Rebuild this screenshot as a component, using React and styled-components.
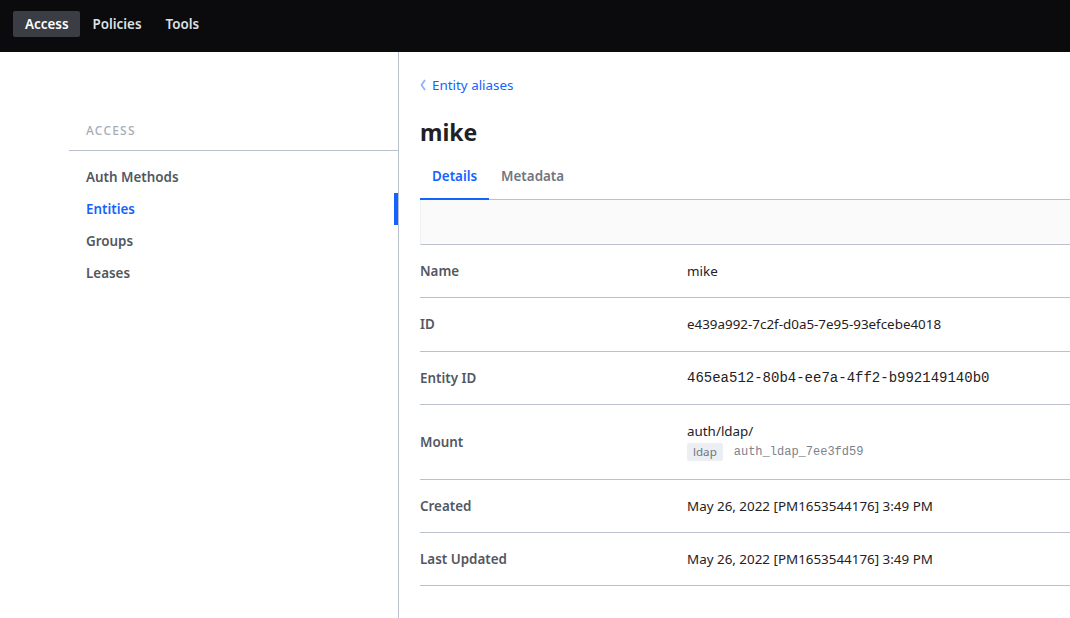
import React from "react";
import styled, { createGlobalStyle } from "styled-components";

const Global = createGlobalStyle`
  html, body { margin: 0; padding: 0; background: #fff; }
  body { font-family: "Noto Sans", sans-serif; font-size: 13.4px; color: #1f2124; }
  * { box-sizing: border-box; }
`;

const Page = styled.div`
  display: flex;
  flex-direction: column;
  min-height: 618px;
`;

const TopBar = styled.header`
  height: 52px;
  background: #0b0b0d;
  display: flex;
  align-items: center;
  padding: 0 13px 4px;
`;

const NavItem = styled.a`
  font-size: 13.4px;
  font-weight: 600;
  color: ${(p) => (p.$active ? "#ffffff" : "#dce0e6")};
  background: ${(p) => (p.$active ? "#3b3d45" : "transparent")};
  border-radius: 2px;
  padding: 0 12px;
  height: 26px;
  line-height: 26px;
  text-decoration: none;
`;

const Body = styled.div`
  display: flex;
  flex: 1;
`;

const Sidebar = styled.aside`
  width: 399px;
  flex: none;
  border-right: 1px solid #bac1cc;
  padding: 71px 0 0 69px;
  min-height: 566px;
`;

const SideLabel = styled.div`
  font-size: 12px;
  font-weight: 500;
  letter-spacing: 1.2px;
  text-transform: uppercase;
  color: #a6adb8;
  line-height: 16px;
  padding: 0 0 11px 17px;
  border-bottom: 1px solid #bac1cc;
`;

const SideList = styled.nav`
  display: flex;
  flex-direction: column;
  padding-top: 10px;
`;

const SideItem = styled.a`
  display: block;
  height: 32px;
  line-height: 32px;
  padding-left: 17px;
  font-weight: 600;
  text-decoration: none;
  color: ${(p) => (p.$active ? "#1563ff" : "#525761")};
  border-right: 4px solid ${(p) => (p.$active ? "#1563ff" : "transparent")};
`;

const Main = styled.main`
  flex: 1;
  padding: 22px 0 0 21px;
  min-width: 0;
`;

const Crumb = styled.a`
  display: flex;
  align-items: center;
  gap: 6px;
  color: #1563ff;
  line-height: 22px;
  text-decoration: none;
`;

const Title = styled.h1`
  margin: 21px 0 0;
  font-size: 23px;
  font-weight: 700;
  line-height: 30px;
  color: #1f2124;
`;

const Tabs = styled.div`
  display: flex;
  margin-top: 7px;
  border-bottom: 1px solid #bac1cc;
`;

const Tab = styled.a`
  padding: 0 12px;
  height: 46px;
  line-height: 44px;
  font-weight: 600;
  text-decoration: none;
  color: ${(p) => (p.$active ? "#1563ff" : "#6f7682")};
  border-bottom: 2px solid ${(p) => (p.$active ? "#1563ff" : "transparent")};
  margin-bottom: -1px;
`;

const Toolbar = styled.div`
  height: 45px;
  background: #fafafa;
  border-left: 1px solid #eff0f2;
  border-bottom: 1px solid #bac1cc;
`;

const Row = styled.div`
  display: flex;
  align-items: center;
  padding: 16px 0;
  border-bottom: 1px solid #bac1cc;
  line-height: 20.33px;
`;

const Label = styled.div`
  width: 267px;
  flex: none;
  font-weight: 600;
  color: #525761;
`;

const Value = styled.div`
  color: #1f2124;
  font-family: ${(p) => (p.$mono ? '"Liberation Mono", monospace' : "inherit")};
  font-size: ${(p) => (p.$mono ? "14px" : "inherit")};
`;

const Meta = styled.div`
  display: flex;
  align-items: center;
  gap: 11px;
  margin-top: 1px;
`;

const Tag = styled.span`
  background: #ebeef2;
  color: #6f7682;
  font-size: 11.6px;
  line-height: 18px;
  padding: 0 6px;
  border-radius: 2px;
`;

const Accessor = styled.span`
  font-family: "Liberation Mono", monospace;
  font-size: 12px;
  color: #7c828d;
`;

function Chevron() {
  return (
    <svg width="6" height="12" viewBox="0 0 6 12">
      <path d="M5 1 L1.5 6 L5 11" fill="none" stroke="#8fb3ff" strokeWidth="1.8" />
    </svg>
  );
}

export default function App() {
  const rows = [
    ["Name", "mike"],
    ["ID", "e439a992-7c2f-d0a5-7e95-93efcebe4018"],
  ];
  return (
    <Page>
      <Global />
      <TopBar>
        <NavItem $active>Access</NavItem>
        <NavItem>Policies</NavItem>
        <NavItem>Tools</NavItem>
      </TopBar>
      <Body>
        <Sidebar>
          <SideLabel>Access</SideLabel>
          <SideList>
            <SideItem>Auth Methods</SideItem>
            <SideItem $active>Entities</SideItem>
            <SideItem>Groups</SideItem>
            <SideItem>Leases</SideItem>
          </SideList>
        </Sidebar>
        <Main>
          <Crumb>
            <Chevron />
            Entity aliases
          </Crumb>
          <Title>mike</Title>
          <Tabs>
            <Tab $active>Details</Tab>
            <Tab>Metadata</Tab>
          </Tabs>
          <Toolbar />
          {rows.map(([l, v]) => (
            <Row key={l}>
              <Label>{l}</Label>
              <Value>{v}</Value>
            </Row>
          ))}
          <Row>
            <Label>Entity ID</Label>
            <Value $mono>465ea512-80b4-ee7a-4ff2-b992149140b0</Value>
          </Row>
          <Row>
            <Label>Mount</Label>
            <Value>
              auth/ldap/
              <Meta>
                <Tag>ldap</Tag>
                <Accessor>auth_ldap_7ee3fd59</Accessor>
              </Meta>
            </Value>
          </Row>
          <Row>
            <Label>Created</Label>
            <Value>May 26, 2022 [PM1653544176] 3:49 PM</Value>
          </Row>
          <Row>
            <Label>Last Updated</Label>
            <Value>May 26, 2022 [PM1653544176] 3:49 PM</Value>
          </Row>
        </Main>
      </Body>
    </Page>
  );
}
